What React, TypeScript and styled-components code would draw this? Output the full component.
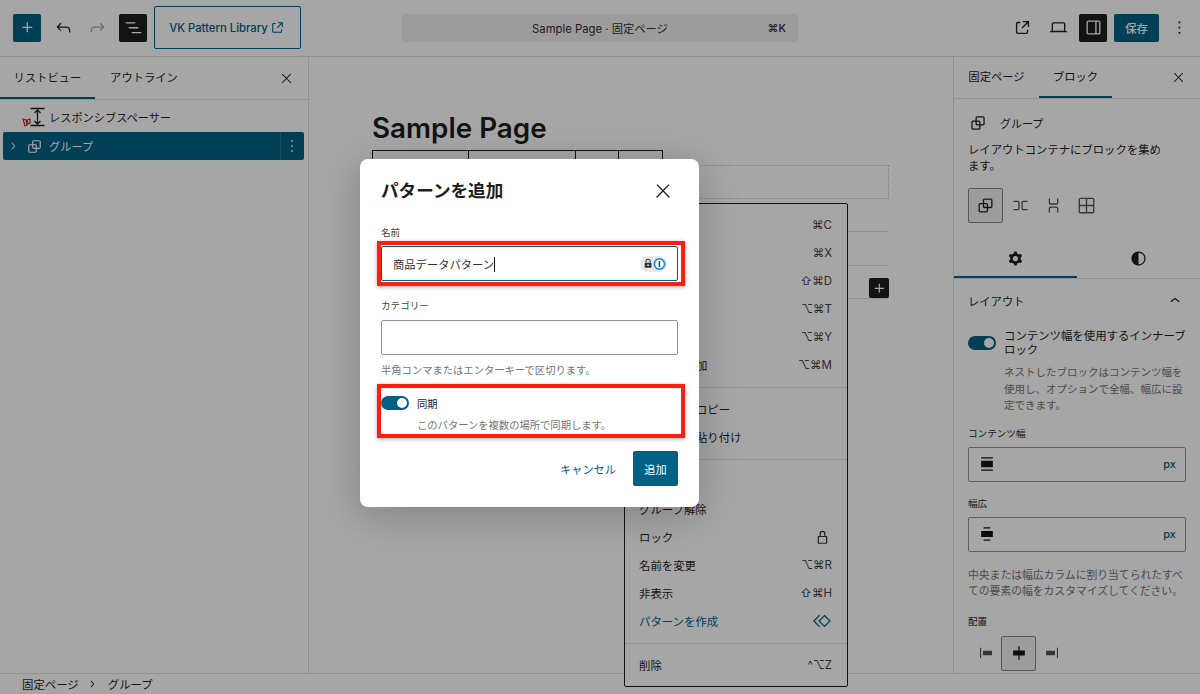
import React from "react";
import styled, { createGlobalStyle } from "styled-components";

const TEAL = "#006184";
const INK = "#1e1e1e";
const MUTED = "#757575";
const LINE = "#e0e0e0";

const Global = createGlobalStyle`
  html, body { margin: 0; padding: 0; background: #fff; }
  body { font-family: Inter, "Noto Sans CJK JP", sans-serif; color: ${INK}; }
  * { box-sizing: border-box; }
`;

const P: Record<string, string> = {
  plus: "M11 12.5V17.5H12.5V12.5H17.5V11H12.5V6H11V11H6V12.5H11Z",
  undo: "M18.3 11.7c-.6-.6-1.4-.9-2.3-.9H6.7l2.9-3.3-1.1-1-4.5 5L8.5 16l1-1-2.7-2.7H16c.5 0 .9.2 1.3.5 1 1 1 3.4 1 4.5v.3h1.5v-.2c0-1.5 0-4.3-1.5-5.7z",
  redo: "M15.6 6.5l-1.1 1 2.9 3.3H8c-.9 0-1.7.3-2.3.9-1.4 1.5-1.4 4.2-1.4 5.6v.2h1.5v-.3c0-1.1 0-3.5 1-4.5.3-.3.7-.5 1.3-.5h9.2L14.5 15l1.1 1.1 4.6-4.6-4.6-5z",
  list: "M3 6h11v1.5H3V6Zm3.5 5.5h11V13h-11v-1.5ZM21 17H10v1.5h11V17Z",
  external: "M19.5 4.5h-7V6h4.44l-5.97 5.97 1.06 1.06L18 7.06v4.44h1.5v-7Zm-13 1a2 2 0 0 0-2 2v10a2 2 0 0 0 2 2h10a2 2 0 0 0 2-2v-3H17v3a.5.5 0 0 1-.5.5h-10a.5.5 0 0 1-.5-.5v-10a.5.5 0 0 1 .5-.5h3V5.5h-3Z",
  laptop: "M20.5 16h-.7V8c0-1.1-.9-2-2-2H6.2c-1.1 0-2 .9-2 2v8h-.7c-.8 0-1.5.7-1.5 1.5h20c0-.8-.7-1.5-1.5-1.5zM5.7 8c0-.3.2-.5.5-.5h11.6c.3 0 .5.2.5.5v7.6H5.7V8z",
  drawer: "M18 4H6c-1.1 0-2 .9-2 2v12c0 1.1.9 2 2 2h12c1.1 0 2-.9 2-2V6c0-1.1-.9-2-2-2zm-4 14.5H6c-.3 0-.5-.2-.5-.5V6c0-.3.2-.5.5-.5h8v13zm4.5-.5c0 .3-.2.5-.5.5h-2.5v-13H18c.3 0 .5.2.5.5v12z",
  more: "M13 19h-2v-2h2v2zm0-6h-2v-2h2v2zm0-6h-2V5h2v2z",
  close: "M13 11.8l6.1-6.3-1-1-6.1 6.2-6.1-6.2-1 1 6.1 6.3-6.5 6.7 1 1 6.5-6.6 6.5 6.6 1-1z",
  group: "M18 4h-7c-1.1 0-2 .9-2 2v3H6c-1.1 0-2 .9-2 2v7c0 1.1.9 2 2 2h7c1.1 0 2-.9 2-2v-3h3c1.1 0 2-.7 2-2V6c0-1.1-.9-2-2-2zm-4.5 14c0 .3-.2.5-.5.5H6c-.3 0-.5-.2-.5-.5v-7c0-.3.2-.5.5-.5h3V13c0 1.1.9 2 2 2h2.5v3zm0-4.5H11c-.3 0-.5-.2-.5-.5v-2.5H13c.3 0 .5.2.5.5v2.5zm5-.5c0 .3-.2.5-.5.5h-3V11c0-1.1-.9-2-2-2h-2.5V6c0-.3.2-.5.5-.5h7c.3 0 .5.2.5.5v7z",
  row: "M4 6.5h5a2 2 0 0 1 2 2v7a2 2 0 0 1-2 2H4V16h5a.5.5 0 0 0 .5-.5v-7A.5.5 0 0 0 9 8H4V6.5Zm16 0h-5a2 2 0 0 0-2 2v7a2 2 0 0 0 2 2h5V16h-5a.5.5 0 0 1-.5-.5v-7A.5.5 0 0 1 15 8h5V6.5Z",
  stack: "M17.5 4v5a2 2 0 0 1-2 2h-7a2 2 0 0 1-2-2V4H8v5a.5.5 0 0 0 .5.5h7A.5.5 0 0 0 16 9V4h1.5Zm0 16v-5a2 2 0 0 0-2-2h-7a2 2 0 0 0-2 2v5H8v-5a.5.5 0 0 1 .5-.5h7a.5.5 0 0 1 .5.5v5h1.5Z",
  grid: "M3 5c0-1.1.9-2 2-2h14c1.1 0 2 .9 2 2v14c0 1.1-.9 2-2 2H5c-1.1 0-2-.9-2-2V5Zm2-.5h6.25v6.75H4.5V5c0-.28.22-.5.5-.5Zm-.5 8.25V19c0 .28.22.5.5.5h6.25v-6.75H4.5Zm8.25 0v6.75H19c.28 0 .5-.22.5-.5v-6.25h-6.75Zm0-1.5h6.75V5c0-.28-.22-.5-.5-.5h-6.25v6.75Z",
  cog: "M10.289 4.836A1 1 0 0 1 11.275 4h1.306a1 1 0 0 1 .987.836l.244 1.466c.787.26 1.503.679 2.108 1.218l1.393-.522a1 1 0 0 1 1.216.437l.653 1.13a1 1 0 0 1-.23 1.273l-1.148.944a6.025 6.025 0 0 1 0 2.435l1.149.946a1 1 0 0 1 .23 1.272l-.653 1.13a1 1 0 0 1-1.216.437l-1.394-.522c-.605.54-1.32.958-2.108 1.218l-.244 1.466a1 1 0 0 1-.987.836h-1.306a1 1 0 0 1-.986-.836l-.244-1.466a5.995 5.995 0 0 1-2.108-1.218l-1.394.522a1 1 0 0 1-1.217-.436l-.653-1.131a1 1 0 0 1 .23-1.272l1.149-.946a6.026 6.026 0 0 1 0-2.435l-1.148-.944a1 1 0 0 1-.23-1.272l.653-1.131a1 1 0 0 1 1.217-.437l1.393.522a5.994 5.994 0 0 1 2.108-1.218l.244-1.466ZM14.929 12a3 3 0 1 1-6 0 3 3 0 0 1 6 0Z",
  half: "M12 3a9 9 0 1 1 0 18 9 9 0 0 1 0-18Zm0 1.6v14.8a7.4 7.4 0 0 0 0-14.8Z",
  chevUp: "M6.5 12.4L12 8l5.5 4.4-.9 1.2L12 10l-4.5 3.6-1-1.2z",
  chevRight: "M10.6 6 9.4 7l4.4 5-4.4 5 1.2 1 5.2-6-5.2-6z",
  lockO: "M12 3.5A3.75 3.75 0 0 0 8.25 7.25V10H7a1 1 0 0 0-1 1v8a1 1 0 0 0 1 1h10a1 1 0 0 0 1-1v-8a1 1 0 0 0-1-1h-1.25V7.25A3.75 3.75 0 0 0 12 3.5ZM9.75 10V7.25a2.25 2.25 0 0 1 4.5 0V10h-4.5ZM7.5 11.5h9v7h-9v-7Z",
  symbol: "M15 4.4 22.6 12 15 19.6 7.4 12 15 4.4Zm0 2.1L9.5 12l5.5 5.5 5.5-5.5L15 6.5ZM8.6 4.6 1.2 12l7.4 7.4 1.05-1.05L3.3 12l6.35-6.35L8.6 4.6Z",
  widthContent: "M5 4h14v1.5H5V4Zm0 14.5h14V20H5v-1.5ZM5 8h14v8H5V8Z",
  widthWide: "M8 4h8v1.5H8V4Zm0 14.5h8V20H8v-1.5ZM5 8.5h14v7H5v-7Z",
  alignLeft: "M4 5h1.5v14H4V5Zm4 4h12v6H8V9Z",
  alignCenter: "M11.25 4h1.5v5H19v6h-6.25v5h-1.5v-5H5V9h6.25V4Z",
  alignRight: "M18.5 5H20v14h-1.5V5ZM4 9h12v6H4V9Z",
};

const Svg = styled.svg<{ $c?: string }>`
  display: block;
  flex: none;
  fill: ${(p) => p.$c || "currentColor"};
`;

const Icon = ({ n, s = 21, c }: { n: string; s?: number; c?: string }) => (
  <Svg viewBox="0 0 24 24" width={s} height={s} $c={c} fillRule="evenodd">
    <path d={P[n]} />
  </Svg>
);

const App_ = styled.div`
  position: relative;
  width: 1200px;
  height: 694px;
  overflow: hidden;
  display: flex;
  flex-direction: column;
  background: #fff;
`;

/* ---------- header ---------- */
const Header = styled.header`
  flex: none;
  height: 57px;
  border-bottom: 1px solid ${LINE};
  display: flex;
  align-items: center;
  padding: 0 7px 1px 13px;
`;
const HeaderSide = styled.div`
  display: flex;
  align-items: center;
  flex: none;
`;
const HeaderEnd = styled(HeaderSide)`
  margin-left: auto;
`;
const SquareBtn = styled.button<{ $bg?: string; $fg?: string; $w?: number; $ml?: number }>`
  width: ${(p) => p.$w || 28}px;
  height: 28px;
  margin-left: ${(p) => p.$ml || 0}px;
  padding: 0;
  border: 0;
  border-radius: 2px;
  background: ${(p) => p.$bg || "transparent"};
  color: ${(p) => p.$fg || INK};
  display: flex;
  align-items: center;
  justify-content: center;
  font: 500 11.3px Inter, "Noto Sans CJK JP", sans-serif;
`;
const LinkBtn = styled.a`
  margin-left: 7px;
  width: 147px;
  height: 43px;
  border: 1px solid ${TEAL};
  border-radius: 2px;
  display: flex;
  align-items: center;
  justify-content: center;
  gap: 1px;
  color: ${TEAL};
  font-size: 11.3px;
  font-weight: 500;
`;
const CommandBar = styled.div`
  margin-left: 101px;
  width: 396px;
  height: 28px;
  border-radius: 2px;
  background: #f0f0f0;
  position: relative;
  display: flex;
  align-items: center;
  justify-content: center;
  font-size: 11.3px;
  color: #2f2f2f;
`;
const Shortcut = styled.span`
  position: absolute;
  right: 12px;
  font-size: 11px;
  font-weight: 500;
`;

/* ---------- body ---------- */
const Body = styled.div`
  flex: 1;
  min-height: 0;
  display: flex;
`;
const ListPanel = styled.aside`
  flex: none;
  width: 309px;
  border-right: 1px solid ${LINE};
  display: flex;
  flex-direction: column;
`;
const TabBar = styled.div`
  flex: none;
  height: 43px;
  border-bottom: 1px solid ${LINE};
  display: flex;
  align-items: stretch;
  position: relative;
`;
const Tab = styled.div<{ $on?: boolean; $w: number }>`
  width: ${(p) => p.$w}px;
  display: flex;
  align-items: center;
  justify-content: center;
  font-size: 11.3px;
  padding-bottom: 3px;
  box-shadow: ${(p) => (p.$on ? `inset 0 -2px 0 ${TEAL}` : "none")};
`;
const TabClose = styled.div`
  margin-left: auto;
  width: 43px;
  display: flex;
  align-items: center;
  justify-content: center;
`;
const TreeRow = styled.div<{ $on?: boolean }>`
  height: 28px;
  margin: 0 4px 0 3px;
  border-radius: 2px;
  display: flex;
  align-items: center;
  font-size: 11.2px;
  background: ${(p) => (p.$on ? TEAL : "transparent")};
  color: ${(p) => (p.$on ? "#fff" : INK)};
`;
const Tree = styled.div`
  padding-top: 4px;
`;
const IndentSpace = styled.div<{ $w: number }>`
  width: ${(p) => p.$w}px;
  flex: none;
`;
const RowTail = styled.div`
  margin-left: auto;
  width: 24px;
  height: 100%;
  padding-right: 2px;
  border-left: 1px solid rgba(255, 255, 255, 0.12);
  display: flex;
  align-items: center;
  justify-content: center;
`;
const SpacerRow = styled(TreeRow)`
  margin-top: -1px;
  margin-bottom: 1px;
`;

/* ---------- canvas ---------- */
const Canvas = styled.main`
  position: relative;
  flex: 1;
  min-width: 0;
  padding: 55px 0 0 63px;
`;
const PageTitle = styled.h1`
  margin: 0;
  height: 38px;
  font-size: 27.8px;
  line-height: 33px;
  font-weight: 600;
  color: #1e1e1e;
`;
const ContentCol = styled.div`
  width: 517px;
`;
const TableStub = styled.div`
  width: 291px;
  height: 15px;
  border: 1px solid ${INK};
  display: grid;
  grid-template-columns: 96px 107px 43px 1fr;
`;
const TableCell = styled.div`
  border-right: 1px solid ${INK};
  &:last-child {
    border-right: 0;
  }
`;
const DottedBox = styled.div`
  height: 34px;
  border: 1px dotted #c4c4c4;
`;
const LineRow = styled.div`
  height: 33.4px;
  border-bottom: 1px solid ${LINE};
`;
const InsertBtn = styled.div`
  position: absolute;
  left: 560px;
  top: 221px;
  width: 20px;
  height: 20px;
  border-radius: 2px;
  background: ${INK};
  color: #fff;
  display: flex;
  align-items: center;
  justify-content: center;
`;
const Menu = styled.div`
  position: absolute;
  z-index: 3;
  left: 315px;
  top: 146px;
  width: 224px;
  height: 484px;
  background: #fff;
  border: 1px solid ${INK};
  border-radius: 2px;
`;
const MenuGroup = styled.div`
  padding: 7px 0 8px;
  border-bottom: 1px solid ${LINE};
  &:last-child {
    border-bottom: 0;
  }
`;
const MenuItem = styled.div<{ $accent?: boolean }>`
  height: 28px;
  padding: 0 15px 0 14px;
  display: flex;
  align-items: center;
  justify-content: space-between;
  font-size: 11.4px;
  color: ${(p) => (p.$accent ? TEAL : INK)};
`;
const Keys = styled.span`
  font-size: 11.5px;
  color: #444;
`;

/* ---------- sidebar ---------- */
const Sidebar = styled.aside`
  flex: none;
  width: 247px;
  border-left: 1px solid ${LINE};
  overflow: hidden;
  display: flex;
  flex-direction: column;
`;
const SideTabs = styled(TabBar)`
  height: 42px;
`;
const CardHead = styled.div`
  display: flex;
  align-items: center;
  height: 24px;
  gap: 12px;
  font-size: 11px;
`;
const Description = styled.p`
  margin: 7px 0 0;
  width: 197px;
  font-size: 11.35px;
  line-height: 16px;
`;
const Variations = styled.div`
  display: flex;
  margin: 14px 0 0;
`;
const VarBtn = styled.div<{ $on?: boolean }>`
  width: 35px;
  height: 35px;
  margin-right: ${(p) => (p.$on ? 0 : "-2px")};
  display: flex;
  align-items: center;
  justify-content: center;
  border-radius: 2px;
  color: #555;
  ${(p) => p.$on && `border: 1px solid #888; background: #f0f0f0; color: ${INK};`}
`;
const Inspector = styled.div`
  display: flex;
  height: 38px;
  border-bottom: 1px solid ${LINE};
  margin-top: 18px;
`;
const InspectorTab = styled.div<{ $on?: boolean }>`
  width: 123px;
  display: flex;
  align-items: center;
  justify-content: center;
  padding-bottom: 3px;
  box-shadow: ${(p) => (p.$on ? `inset 0 -2px 0 ${TEAL}` : "none")};
`;
const CardTop = styled.div`
  padding: 12px 14px 0;
`;
const Section = styled.div`
  padding: 0 14px;
`;
const SectionHead = styled.div`
  height: 44px;
  display: flex;
  align-items: center;
  justify-content: space-between;
  font-size: 11.3px;
  padding-right: 1px;
`;
const ToggleRow = styled.div`
  display: flex;
  gap: 8px;
  margin-top: 6px;
`;
const Toggle = styled.span`
  flex: none;
  width: 28px;
  height: 14px;
  border-radius: 7px;
  background: ${TEAL};
  position: relative;
  &::after {
    content: "";
    position: absolute;
    right: 2px;
    top: 2px;
    width: 10px;
    height: 10px;
    border-radius: 50%;
    background: #fff;
  }
`;
const SideToggle = styled(Toggle)`
  margin-top: 7px;
`;
const ToggleLabel = styled.div`
  font-size: 11.4px;
  line-height: 14px;
`;
const ToggleHelp = styled.div`
  margin-top: 8px;
  font-size: 10.5px;
  line-height: 16.5px;
  color: ${MUTED};
`;
const FieldLabel = styled.div`
  font-size: 9.6px;
  line-height: 12px;
  color: ${INK};
`;
const SideField = styled.div`
  margin-top: 13px;
  & + & {
    margin-top: 16px;
  }
`;
const UnitInput = styled.div`
  margin-top: 7px;
  height: 35px;
  border: 1px solid #949494;
  border-radius: 2px;
  display: flex;
  align-items: center;
  justify-content: space-between;
  padding: 0 9px 0 8px;
  font-size: 11px;
  font-weight: 500;
  color: ${TEAL};
`;
const Help = styled.p`
  margin: 16px 0 0;
  font-size: 10.8px;
  line-height: 16px;
  color: ${MUTED};
`;
const AlignWrap = styled.div`
  margin-top: 16px;
`;
const AlignRow = styled.div`
  display: flex;
  margin-top: 8px;
  padding-left: 1px;
`;
const AlignBtn = styled.div<{ $on?: boolean }>`
  width: ${(p) => (p.$on ? 35 : 33)}px;
  height: 35px;
  margin: ${(p) => (p.$on ? "0 -1px" : "0")};
  display: flex;
  align-items: center;
  justify-content: center;
  color: #555;
  border-radius: 2px;
  ${(p) => p.$on && `border: 1px solid #888; background: #f0f0f0; color: ${INK};`}
`;

/* ---------- footer ---------- */
const Footer = styled.footer`
  flex: none;
  height: 21px;
  border-top: 1px solid ${LINE};
  background: #fff;
  display: flex;
  align-items: center;
  padding-left: 22px;
  font-size: 11.4px;
  gap: 6px;
`;
const CrumbEnd = styled.span`
  margin-left: 3px;
`;

/* ---------- modal ---------- */
const Overlay = styled.div`
  position: absolute;
  inset: 0;
  z-index: 10;
  background: rgba(0, 0, 0, 0.35);
  padding: 159px 0 0 360px;
`;
const Dialog = styled.div`
  width: 339px;
  height: 348px;
  background: #fff;
  border-radius: 8px;
  padding: 0 21px;
  box-shadow: 0 8px 40px rgba(0, 0, 0, 0.22);
  display: flex;
  flex-direction: column;
`;
const DialogHead = styled.div`
  height: 64px;
  display: flex;
  align-items: center;
  justify-content: space-between;
  padding-right: 4px;
`;
const DialogTitle = styled.h2`
  margin: -4px 0 0;
  font-size: 17.6px;
  font-weight: 700;
  color: ${INK};
`;
const DialogLabel = styled(FieldLabel)`
  color: #444;
`;
const NameLabel = styled(DialogLabel)`
  margin-top: 4px;
`;
const CategoryLabel = styled(DialogLabel)`
  margin-top: 19px;
`;
const Annotated = styled.div`
  position: relative;
`;
const RedFrame = styled.div`
  position: absolute;
  pointer-events: none;
  inset: -5px -7px -5px -4px;
  border: 4.5px solid #fb1f10;
  box-shadow: 0 1px 4px rgba(0, 0, 0, 0.35);
`;
const TextBox = styled.div<{ $focus?: boolean }>`
  margin-top: 8px;
  height: 35px;
  border: 1px solid #949494;
  border-radius: 2px;
  display: flex;
  align-items: center;
  justify-content: space-between;
  padding: 0 10px 0 11px;
  font-size: 11.3px;
  color: #333;
  ${(p) => p.$focus && `border: 1.5px solid ${TEAL};`}
`;
const NameBoxWrap = styled(Annotated)`
  margin-top: 7px;
`;
const NameBox = styled(TextBox)`
  margin-top: 0;
`;
const Caret = styled.span`
  display: inline-block;
  width: 1px;
  height: 15px;
  background: #111;
  vertical-align: -3px;
`;
const Badge = styled.div`
  width: 27px;
  height: 16px;
  border-radius: 8px;
  background: #e8e8e8;
  display: flex;
  align-items: center;
  justify-content: space-between;
  padding: 0 1px 0 3px;
`;
const Hint = styled.p`
  margin: 8px 0 0;
  font-size: 10.3px;
  line-height: 14px;
  color: ${MUTED};
`;
const SyncWrap = styled(Annotated)`
  margin-top: 19px;
`;
const SyncFrame = styled(RedFrame)`
  inset: -12px -7px -6px -4px;
`;
const SyncRow = styled.div`
  display: flex;
  align-items: center;
  gap: 8px;
  font-size: 10.3px;
  height: 14px;
`;
const SyncHelp = styled.div`
  margin: 8px 0 0 36px;
  font-size: 10.3px;
  line-height: 14px;
  color: ${MUTED};
`;
const Actions = styled.div`
  margin-top: 19px;
  display: flex;
  justify-content: flex-end;
  align-items: center;
  gap: 17px;
`;
const GhostBtn = styled.span`
  font-size: 11.2px;
  color: ${TEAL};
`;
const PrimaryBtn = styled.div`
  width: 45px;
  height: 35px;
  border-radius: 2px;
  background: ${TEAL};
  color: #fff;
  font-size: 11.2px;
  display: flex;
  align-items: center;
  justify-content: center;
`;

const LockGlyph = () => (
  <svg width="11" height="11" viewBox="0 0 12 12">
    <path d="M3.5 5V3.6a2.5 2.5 0 0 1 5 0V5" fill="none" stroke="#333" strokeWidth="1.2" />
    <rect x="2" y="5" width="8" height="6" rx="1" fill="#333" />
    <circle cx="6" cy="8" r="1" fill="#fff" />
  </svg>
);
const OnePassGlyph = () => (
  <svg width="14" height="14" viewBox="0 0 14 14">
    <circle cx="7" cy="7" r="5.6" fill="#fff" stroke="#1a8cff" strokeWidth="1.8" />
    <rect x="6.2" y="3.8" width="1.6" height="6.4" rx=".6" fill="#1b3a6b" />
  </svg>
);
const SpacerGlyph = () => (
  <svg width="27" height="24" viewBox="0 0 27 24">
    <path d="M10.5 3.5h14M10.5 20.5h14" stroke="#1e1e1e" strokeWidth="1.4" />
    <path d="M17.5 4.5v15M14.5 8l3-3 3 3M14.5 16l3 3 3-3" fill="none" stroke="#1e1e1e" strokeWidth="1.3" />
    <path d="M3 14l3 1 1 5-2 1zM7 15l3-1 0 4-2 1z" fill="none" stroke="#d2222b" strokeWidth="1.2" />
  </svg>
);

const menuA: [string, string][] = [
  ["コピー", "⌘C"],
  ["切り取り", "⌘X"],
  ["複製", "⇧⌘D"],
  ["前に追加", "⌥⌘T"],
  ["後に追加", "⌥⌘Y"],
  ["ノートを追加", "⌥⌘M"],
];

export default function App() {
  return (
    <App_>
      <Global />
      <Header>
        <HeaderSide>
          <SquareBtn $bg={TEAL} $fg="#fff"><Icon n="plus" /></SquareBtn>
          <SquareBtn $ml={8}><Icon n="undo" /></SquareBtn>
          <SquareBtn $ml={6} $fg="#a8a8a8"><Icon n="redo" /></SquareBtn>
          <SquareBtn $ml={8} $bg={INK} $fg="#fff"><Icon n="list" /></SquareBtn>
          <LinkBtn>VK Pattern Library<Icon n="external" s={17} /></LinkBtn>
        </HeaderSide>
        <CommandBar>
          Sample Page · 固定ページ
          <Shortcut>⌘K</Shortcut>
        </CommandBar>
        <HeaderEnd>
          <SquareBtn><Icon n="external" /></SquareBtn>
          <SquareBtn $ml={8}><Icon n="laptop" /></SquareBtn>
          <SquareBtn $ml={7} $bg={INK} $fg="#fff"><Icon n="drawer" /></SquareBtn>
          <SquareBtn $ml={7} $w={45} $bg={TEAL} $fg="#fff">保存</SquareBtn>
          <SquareBtn $ml={6}><Icon n="more" /></SquareBtn>
        </HeaderEnd>
      </Header>

      <Body>
        <ListPanel>
          <TabBar>
            <Tab $on $w={95}>リストビュー</Tab>
            <Tab $w={98}>アウトライン</Tab>
            <TabClose><Icon n="close" s={15} /></TabClose>
          </TabBar>
          <Tree>
            <SpacerRow>
              <IndentSpace $w={17} />
              <SpacerGlyph />
              <IndentSpace $w={2} />
              <span>レスポンシブスペーサー</span>
            </SpacerRow>
            <TreeRow $on>
              <IndentSpace $w={3} />
              <Icon n="chevRight" s={14} />
              <IndentSpace $w={5} />
              <Icon n="group" s={19} />
              <IndentSpace $w={5} />
              <span>グループ</span>
              <RowTail><Icon n="more" s={20} /></RowTail>
            </TreeRow>
          </Tree>
        </ListPanel>

        <Canvas>
          <PageTitle>Sample Page</PageTitle>
          <ContentCol>
            <TableStub>
              <TableCell /><TableCell /><TableCell /><TableCell />
            </TableStub>
            <DottedBox />
            <LineRow />
            <LineRow />
            <LineRow />
          </ContentCol>
          <InsertBtn><Icon n="plus" s={19} /></InsertBtn>
          <Menu>
            <MenuGroup>
              {menuA.map(([a, b]) => (
                <MenuItem key={a}>{a}<Keys>{b}</Keys></MenuItem>
              ))}
            </MenuGroup>
            <MenuGroup>
              <MenuItem>スタイルをコピー</MenuItem>
              <MenuItem>スタイルを貼り付け</MenuItem>
            </MenuGroup>
            <MenuGroup>
              <MenuItem>グループ化</MenuItem>
              <MenuItem>グループ解除</MenuItem>
              <MenuItem>ロック<Icon n="lockO" s={19} c="#333" /></MenuItem>
              <MenuItem>名前を変更<Keys>⌥⌘R</Keys></MenuItem>
              <MenuItem>非表示<Keys>⇧⌘H</Keys></MenuItem>
              <MenuItem $accent>パターンを作成<Icon n="symbol" s={20} c={TEAL} /></MenuItem>
            </MenuGroup>
            <MenuGroup>
              <MenuItem>削除<Keys>^⌥Z</Keys></MenuItem>
            </MenuGroup>
          </Menu>
        </Canvas>

        <Sidebar>
          <SideTabs>
            <Tab $w={85}>固定ページ</Tab>
            <Tab $on $w={73}>ブロック</Tab>
            <TabClose><Icon n="close" s={15} /></TabClose>
          </SideTabs>
          <CardTop>
            <CardHead><Icon n="group" s={20} />グループ</CardHead>
            <Description>レイアウトコンテナにブロックを集めます。</Description>
            <Variations>
              <VarBtn $on><Icon n="group" s={21} /></VarBtn>
              <VarBtn><Icon n="row" s={21} /></VarBtn>
              <VarBtn><Icon n="stack" s={21} /></VarBtn>
              <VarBtn><Icon n="grid" s={21} /></VarBtn>
            </Variations>
          </CardTop>
          <Inspector>
            <InspectorTab $on><Icon n="cog" s={21} /></InspectorTab>
            <InspectorTab><Icon n="half" s={19} /></InspectorTab>
          </Inspector>
          <Section>
            <SectionHead>レイアウト<Icon n="chevUp" s={20} /></SectionHead>
            <ToggleRow>
              <SideToggle />
              <div>
                <ToggleLabel>コンテンツ幅を使用するインナーブロック</ToggleLabel>
                <ToggleHelp>ネストしたブロックはコンテンツ幅を使用し、オプションで全幅、幅広に設定できます。</ToggleHelp>
              </div>
            </ToggleRow>
            <SideField>
              <FieldLabel>コンテンツ幅</FieldLabel>
              <UnitInput><Icon n="widthContent" s={20} c="#111" />px</UnitInput>
            </SideField>
            <SideField>
              <FieldLabel>幅広</FieldLabel>
              <UnitInput><Icon n="widthWide" s={20} c="#111" />px</UnitInput>
            </SideField>
            <Help>中央または幅広カラムに割り当てられたすべての要素の幅をカスタマイズしてください。</Help>
            <AlignWrap>
              <FieldLabel>配置</FieldLabel>
              <AlignRow>
                <AlignBtn><Icon n="alignLeft" s={18} /></AlignBtn>
                <AlignBtn $on><Icon n="alignCenter" s={20} c="#111" /></AlignBtn>
                <AlignBtn><Icon n="alignRight" s={18} /></AlignBtn>
              </AlignRow>
            </AlignWrap>
          </Section>
        </Sidebar>
      </Body>

      <Footer>
        固定ページ
        <Icon n="chevRight" s={14} />
        <CrumbEnd>グループ</CrumbEnd>
      </Footer>

      <Overlay>
        <Dialog>
          <DialogHead>
            <DialogTitle>パターンを追加</DialogTitle>
            <Icon n="close" s={22} />
          </DialogHead>
          <NameLabel>名前</NameLabel>
          <NameBoxWrap>
            <NameBox $focus>
              <span>商品データパターン<Caret /></span>
              <Badge><LockGlyph /><OnePassGlyph /></Badge>
            </NameBox>
            <RedFrame />
          </NameBoxWrap>
          <CategoryLabel>カテゴリー</CategoryLabel>
          <TextBox />
          <Hint>半角コンマまたはエンターキーで区切ります。</Hint>
          <SyncWrap>
            <SyncRow><Toggle />同期</SyncRow>
            <SyncHelp>このパターンを複数の場所で同期します。</SyncHelp>
            <SyncFrame />
          </SyncWrap>
          <Actions>
            <GhostBtn>キャンセル</GhostBtn>
            <PrimaryBtn>追加</PrimaryBtn>
          </Actions>
        </Dialog>
      </Overlay>
    </App_>
  );
}
